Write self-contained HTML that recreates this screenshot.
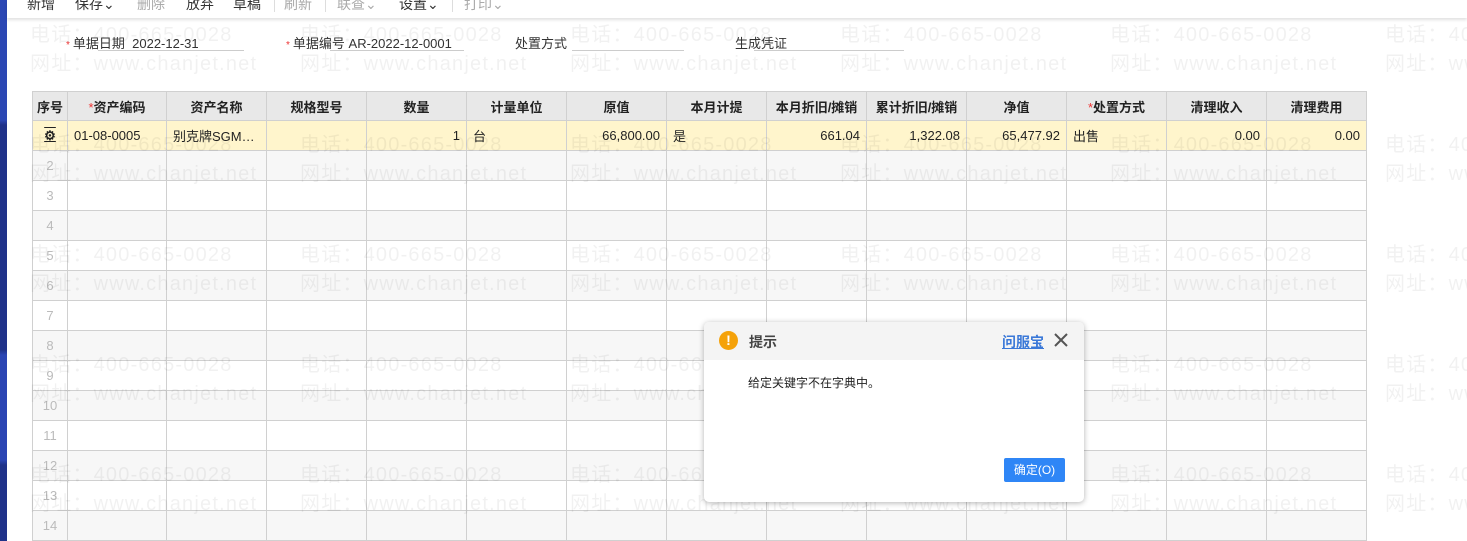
<!DOCTYPE html>
<html><head><meta charset="utf-8"><style>
*{margin:0;padding:0;box-sizing:border-box}
body{width:1467px;height:541px;overflow:hidden;background:#fff;font-family:"Liberation Sans","Noto Sans CJK SC",sans-serif;font-size:12px;color:#222;position:relative}
.side{position:absolute;left:0;top:0;width:7px;height:541px;background:linear-gradient(#2b47b4 0,#2b47b4 120px,#1f3289 125px,#1f3289 350px,#2a45b3 355px,#2a45b3 460px,#1f3289 465px)}
.tb{position:absolute;left:7px;top:0;right:0;height:18px;background:#fff;box-shadow:0 2px 3px rgba(0,0,0,.12);z-index:3;font-size:14px}
.tb span{position:absolute;top:-6px;color:#333}
.tb .d{color:#aaa}
.tb .sep{position:absolute;top:0;width:1px;height:12px;background:#ddd}
.lab{position:absolute;top:33px;font-size:13px;color:#333}
.lab i{color:#e33;font-style:normal;font-size:10px;margin-right:3px}
.ul{position:absolute;top:50px;height:1px;background:#ccc}
table{position:absolute;left:32px;top:91px;border-collapse:collapse;table-layout:fixed}
td,th{border:1px solid #d0d0d0;height:30px;padding:0 6px;font-size:13px;white-space:nowrap;overflow:hidden}
th{background:#e8e8e8;font-weight:bold;color:#222;height:29px;text-align:center}
th i{color:#e33;font-style:normal;font-weight:normal}
tr.y td{background:#fff5cc}
tr.g td{background:#f7f7f7}
td.n{text-align:center;color:#bbb;padding:0}
.r{text-align:right}
.wm{position:absolute;font-size:20px;font-weight:normal;color:rgba(0,0,0,.055);white-space:nowrap;z-index:2;letter-spacing:1.2px;font-family:"Liberation Sans","Noto Sans CJK SC",sans-serif}
.dlg{position:absolute;left:704px;top:322px;width:380px;height:180px;background:#fff;border-radius:5px;box-shadow:0 1px 6px rgba(0,0,0,.3);z-index:5;overflow:hidden}
.dh{height:38px;background:#f4f4f4;position:relative}
.ic{position:absolute;left:15px;top:9px;width:19px;height:19px;border-radius:50%;background:#f5a20a;color:#fff;font-weight:bold;text-align:center;line-height:19px;font-size:14px}
</style></head><body>
<div class="side"></div>
<div class="tb">
<span style="left:20px">新增</span><span style="left:68px">保存⌄</span><span class="d" style="left:130px">删除</span><span style="left:179px">放弃</span><span style="left:226px">草稿</span><div class="sep" style="left:267px"></div><span class="d" style="left:277px">刷新</span><div class="sep" style="left:318px"></div><span class="d" style="left:330px">联查⌄</span><span style="left:392px">设置⌄</span><div class="sep" style="left:445px"></div><span class="d" style="left:457px">打印⌄</span>
</div>
<div class="lab" style="left:66px"><i>*</i>单据日期&nbsp; 2022-12-31</div><div class="ul" style="left:98px;width:146px"></div>
<div class="lab" style="left:286px"><i>*</i>单据编号 AR-2022-12-0001</div><div class="ul" style="left:330px;width:134px"></div>
<div class="lab" style="left:515px">处置方式</div><div class="ul" style="left:572px;width:112px"></div>
<div class="lab" style="left:735px">生成凭证</div><div class="ul" style="left:754px;width:150px"></div>
<table>
<colgroup><col style="width:35px"><col style="width:99px"><col style="width:100px"><col style="width:100px"><col style="width:100px"><col style="width:100px"><col style="width:100px"><col style="width:100px"><col style="width:100px"><col style="width:100px"><col style="width:100px"><col style="width:100px"><col style="width:100px"><col style="width:100px"></colgroup>
<tr><th style="padding:0">序号</th><th><i>*</i>资产编码</th><th>资产名称</th><th>规格型号</th><th>数量</th><th>计量单位</th><th>原值</th><th>本月计提</th><th style="padding:0">本月折旧/摊销</th><th style="padding:0">累计折旧/摊销</th><th>净值</th><th><i>*</i>处置方式</th><th>清理收入</th><th>清理费用</th></tr>
<tr class="y"><td class="n" style="color:#222;font-weight:bold;text-decoration:underline overline">⚙</td><td>01-08-0005</td><td>别克牌SGM…</td><td></td><td class="r">1</td><td>台</td><td class="r">66,800.00</td><td>是</td><td class="r">661.04</td><td class="r">1,322.08</td><td class="r">65,477.92</td><td>出售</td><td class="r">0.00</td><td class="r">0.00</td></tr>
<tr class="g"><td class="n">2</td><td></td><td></td><td></td><td></td><td></td><td></td><td></td><td></td><td></td><td></td><td></td><td></td><td></td></tr>
<tr><td class="n">3</td><td></td><td></td><td></td><td></td><td></td><td></td><td></td><td></td><td></td><td></td><td></td><td></td><td></td></tr>
<tr class="g"><td class="n">4</td><td></td><td></td><td></td><td></td><td></td><td></td><td></td><td></td><td></td><td></td><td></td><td></td><td></td></tr>
<tr><td class="n">5</td><td></td><td></td><td></td><td></td><td></td><td></td><td></td><td></td><td></td><td></td><td></td><td></td><td></td></tr>
<tr class="g"><td class="n">6</td><td></td><td></td><td></td><td></td><td></td><td></td><td></td><td></td><td></td><td></td><td></td><td></td><td></td></tr>
<tr><td class="n">7</td><td></td><td></td><td></td><td></td><td></td><td></td><td></td><td></td><td></td><td></td><td></td><td></td><td></td></tr>
<tr class="g"><td class="n">8</td><td></td><td></td><td></td><td></td><td></td><td></td><td></td><td></td><td></td><td></td><td></td><td></td><td></td></tr>
<tr><td class="n">9</td><td></td><td></td><td></td><td></td><td></td><td></td><td></td><td></td><td></td><td></td><td></td><td></td><td></td></tr>
<tr class="g"><td class="n">10</td><td></td><td></td><td></td><td></td><td></td><td></td><td></td><td></td><td></td><td></td><td></td><td></td><td></td></tr>
<tr><td class="n">11</td><td></td><td></td><td></td><td></td><td></td><td></td><td></td><td></td><td></td><td></td><td></td><td></td><td></td></tr>
<tr class="g"><td class="n">12</td><td></td><td></td><td></td><td></td><td></td><td></td><td></td><td></td><td></td><td></td><td></td><td></td><td></td></tr>
<tr><td class="n">13</td><td></td><td></td><td></td><td></td><td></td><td></td><td></td><td></td><td></td><td></td><td></td><td></td><td></td></tr>
<tr class="g"><td class="n">14</td><td></td><td></td><td></td><td></td><td></td><td></td><td></td><td></td><td></td><td></td><td></td><td></td><td></td></tr>
</table>
<div class="wm" style="left:30px;top:18px">电话：400-665-0028</div><div class="wm" style="left:30px;top:47px">网址：www.chanjet.net</div>
<div class="wm" style="left:300px;top:18px">电话：400-665-0028</div><div class="wm" style="left:300px;top:47px">网址：www.chanjet.net</div>
<div class="wm" style="left:570px;top:18px">电话：400-665-0028</div><div class="wm" style="left:570px;top:47px">网址：www.chanjet.net</div>
<div class="wm" style="left:840px;top:18px">电话：400-665-0028</div><div class="wm" style="left:840px;top:47px">网址：www.chanjet.net</div>
<div class="wm" style="left:1110px;top:18px">电话：400-665-0028</div><div class="wm" style="left:1110px;top:47px">网址：www.chanjet.net</div>
<div class="wm" style="left:1385px;top:18px">电话：400-665-0028</div><div class="wm" style="left:1385px;top:47px">网址：www.chanjet.net</div>
<div class="wm" style="left:30px;top:128px">电话：400-665-0028</div><div class="wm" style="left:30px;top:157px">网址：www.chanjet.net</div>
<div class="wm" style="left:300px;top:128px">电话：400-665-0028</div><div class="wm" style="left:300px;top:157px">网址：www.chanjet.net</div>
<div class="wm" style="left:570px;top:128px">电话：400-665-0028</div><div class="wm" style="left:570px;top:157px">网址：www.chanjet.net</div>
<div class="wm" style="left:840px;top:128px">电话：400-665-0028</div><div class="wm" style="left:840px;top:157px">网址：www.chanjet.net</div>
<div class="wm" style="left:1110px;top:128px">电话：400-665-0028</div><div class="wm" style="left:1110px;top:157px">网址：www.chanjet.net</div>
<div class="wm" style="left:1385px;top:128px">电话：400-665-0028</div><div class="wm" style="left:1385px;top:157px">网址：www.chanjet.net</div>
<div class="wm" style="left:30px;top:238px">电话：400-665-0028</div><div class="wm" style="left:30px;top:267px">网址：www.chanjet.net</div>
<div class="wm" style="left:300px;top:238px">电话：400-665-0028</div><div class="wm" style="left:300px;top:267px">网址：www.chanjet.net</div>
<div class="wm" style="left:570px;top:238px">电话：400-665-0028</div><div class="wm" style="left:570px;top:267px">网址：www.chanjet.net</div>
<div class="wm" style="left:840px;top:238px">电话：400-665-0028</div><div class="wm" style="left:840px;top:267px">网址：www.chanjet.net</div>
<div class="wm" style="left:1110px;top:238px">电话：400-665-0028</div><div class="wm" style="left:1110px;top:267px">网址：www.chanjet.net</div>
<div class="wm" style="left:1385px;top:238px">电话：400-665-0028</div><div class="wm" style="left:1385px;top:267px">网址：www.chanjet.net</div>
<div class="wm" style="left:30px;top:348px">电话：400-665-0028</div><div class="wm" style="left:30px;top:377px">网址：www.chanjet.net</div>
<div class="wm" style="left:300px;top:348px">电话：400-665-0028</div><div class="wm" style="left:300px;top:377px">网址：www.chanjet.net</div>
<div class="wm" style="left:570px;top:348px">电话：400-665-0028</div><div class="wm" style="left:570px;top:377px">网址：www.chanjet.net</div>
<div class="wm" style="left:840px;top:348px">电话：400-665-0028</div><div class="wm" style="left:840px;top:377px">网址：www.chanjet.net</div>
<div class="wm" style="left:1110px;top:348px">电话：400-665-0028</div><div class="wm" style="left:1110px;top:377px">网址：www.chanjet.net</div>
<div class="wm" style="left:1385px;top:348px">电话：400-665-0028</div><div class="wm" style="left:1385px;top:377px">网址：www.chanjet.net</div>
<div class="wm" style="left:30px;top:458px">电话：400-665-0028</div><div class="wm" style="left:30px;top:487px">网址：www.chanjet.net</div>
<div class="wm" style="left:300px;top:458px">电话：400-665-0028</div><div class="wm" style="left:300px;top:487px">网址：www.chanjet.net</div>
<div class="wm" style="left:570px;top:458px">电话：400-665-0028</div><div class="wm" style="left:570px;top:487px">网址：www.chanjet.net</div>
<div class="wm" style="left:840px;top:458px">电话：400-665-0028</div><div class="wm" style="left:840px;top:487px">网址：www.chanjet.net</div>
<div class="wm" style="left:1110px;top:458px">电话：400-665-0028</div><div class="wm" style="left:1110px;top:487px">网址：www.chanjet.net</div>
<div class="wm" style="left:1385px;top:458px">电话：400-665-0028</div><div class="wm" style="left:1385px;top:487px">网址：www.chanjet.net</div>
<div class="dlg">
<div class="dh"><div class="ic">!</div><div style="position:absolute;left:45px;top:10px;font-size:14px;font-weight:bold;color:#444">提示</div>
<div style="position:absolute;left:298px;top:10px;font-size:14px;font-weight:bold;color:#3a78d8;text-decoration:underline">问服宝</div>
<svg style="position:absolute;left:350px;top:11px" width="14" height="14"><path d="M1 1L13 13M13 1L1 13" stroke="#555" stroke-width="2"/></svg></div>
<div style="position:absolute;left:44px;top:52px;font-size:12px;color:#222">给定关键字不在字典中。</div>
<div style="position:absolute;left:300px;top:136px;width:61px;height:24px;background:#2f86f6;border-radius:2px;color:#fff;font-size:12px;text-align:center;line-height:24px">确定(O)</div>
</div>
</body></html>
